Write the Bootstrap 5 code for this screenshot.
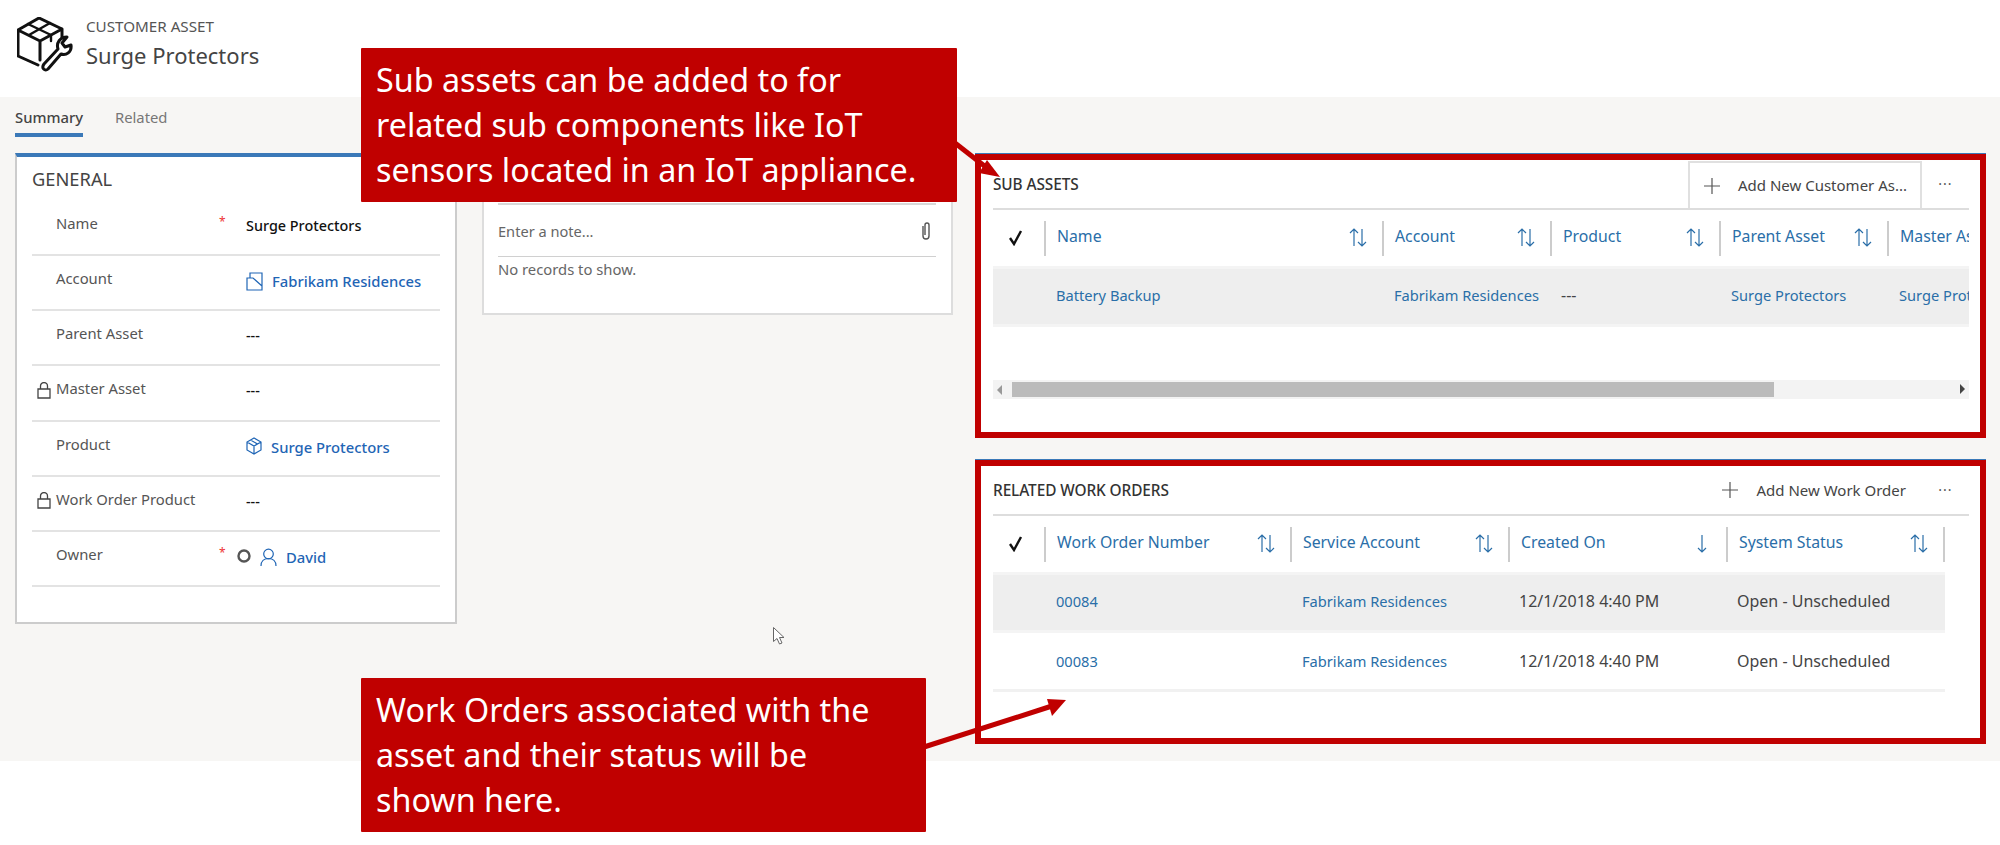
<!DOCTYPE html>
<html lang="en">
<head>
<meta charset="utf-8">
<title>Customer Asset</title>
<link rel="stylesheet" href="https://cdn.jsdelivr.net/npm/bootstrap@5.3.0/dist/css/bootstrap.min.css">
<style>
html,body{height:845px;overflow:hidden}
body{position:relative;background:#fff;font-family:"Noto Sans","Open Sans",sans-serif;font-size:13px;color:#444}
.ca-head{height:97px;padding:17px 0 0 17px;gap:13px}
.ca-eyebrow{font-size:15.200px;line-height:18px;color:#555}
.ca-title{font-size:22px;line-height:28px;margin-top:6px;color:#444}
.ca-main{height:664px;background:#f7f6f4;padding-left:15px}
.ca-tabs{height:56px;gap:32px;font-size:14.800px;padding-top:9px}
.ca-tab{height:31px;line-height:22px;color:#777}
.ca-tab.on{color:#444;font-weight:500;border-bottom:4px solid #3b79b8}
.ca-cols{gap:25px;align-items:flex-start}
.ca-general{width:442px;height:471px;border:2px solid #ccc;border-top:4px solid #3b79b8;padding:0 15px;background:#fff}
.ca-gtitle{height:44px;font-size:18.300px;line-height:44px;color:#444}
.ca-frow{height:55.170px;border-bottom:2px solid #e3e3e3;font-size:14.800px;width:408px}
.ca-lock{width:24px;padding:11px 0 0 5px}
.ca-label{width:163px;padding-top:12px;line-height:20px;color:#555}
.ca-star{width:18px;padding-top:12px;line-height:18px;color:#e33;font-size:12px}
.ca-value{padding:15px 0 0 9px;line-height:20px;color:#111;font-weight:500;font-size:14.400px;gap:9px;white-space:nowrap}
.ca-value.flush{padding-left:0}
.ca-link{color:#1f65b5;text-decoration:none;font-weight:500;font-size:14.800px}
.ca-notes{width:471px;height:162px;border:2px solid #ddd;padding:48px 15px 0 14px;background:#fff}
.ca-note{height:54px;border-top:2px solid #d8d8d8;border-bottom:1px solid #d0d0d0;color:#666;line-height:53px;font-size:14.600px}
.ca-empty{line-height:24px;color:#666;font-size:14.800px}
.ca-side{margin:1px 0 0 -3px;width:1011px;gap:22px}
.ca-panel{height:284px;border:6px solid #c00000;background:#fff;box-shadow:0 -1px 0 #3b79b8;padding:0 11px 0 12px}
.ca-phead{height:50px;border-bottom:2px solid #ddd}
.ca-ptitle{color:#333;font-weight:500;font-size:15.400px;letter-spacing:-.1px;padding-top:1px}
.ca-cmd{gap:18px;height:47px;padding:0 0 0 16px;color:#444;white-space:nowrap;font-size:15px}
.ca-cmd.open{padding-right:16px}
.ca-cmd.boxed{background:#fff;width:234px;border:2px solid #e0e0e0;border-bottom:0;padding:0 0 0 14px;margin-top:1px}
.ca-more{width:47px;text-align:center;color:#555;letter-spacing:1px;line-height:40px;font-size:14px}
.ca-grid{display:grid;overflow:hidden}
.ca-gridsub{grid-template-columns:51px 338px 168px 169px 168px 82px}
.ca-gridwo{grid-template-columns:51px 246px 218px 218px 219px;width:952px}
.ca-hrow{margin-top:11px;height:35px;font-size:15.800px}
.ca-hcell{height:35px;border-left:2px solid #ccc;padding:0 15px 3px 11px;color:#2a6ea8;white-space:nowrap;overflow:hidden}
.ca-hcell.last{border-right:2px solid #ccc}
.ca-check{text-align:center;padding-right:5px}
.ca-row{margin-top:10px;height:61px;background:#eee;border-top:3px solid #f4f4f4;border-bottom:3px solid #f4f4f4;padding-bottom:3px;font-size:16px;align-items:center}
.ca-row.plain{margin-top:0;height:59px;background:#fff;border-top:0;border-bottom:3px solid #f1f1f1;padding-bottom:0}
.ca-cell{padding-left:11px;color:#444;white-space:nowrap;overflow:hidden}
.ca-cell a{color:#2a6ea8;text-decoration:none;font-size:14.650px;margin-left:1px}
.ca-scroll{margin-top:53px;height:19px;background:#f3f3f3;padding:2px 0}
.ca-thumb{margin-left:19px;width:762px;height:15px;background:#bbb}
.ca-arr-l{position:absolute;left:4px;top:5px}
.ca-callout{position:absolute;background:#c00000;color:#fff;font-size:32.300px;line-height:45px;padding:9px 0 9px 15px;border-radius:1px;white-space:nowrap}
.ca-c1{left:361px;top:48px;width:596px;height:154px}
.ca-c2{left:361px;top:678px;width:565px;height:154px}
.ca-overlay{position:absolute;left:0;top:0;pointer-events:none}
</style>
</head>
<body>
<header class="ca-head d-flex">
  <svg width="56" height="56" viewBox="0 0 56 56" fill="none" stroke="#111" stroke-width="3" stroke-linejoin="round" stroke-linecap="round">
    <path d="M22 1 1 13v26l20 9M22 1l23 11v9M1 13l22 11 22-12M23 24v19"/>
    <path d="M11 7l23 11v6M33 6 12 18" stroke-width="2.400"/>
    <path d="M27 47 41 32c-2-6 2-12 9-12l-5 6 3 4 6-2c1 7-5 11-10 9L31 52c-3 3-7-1-4-5z" fill="#fff"/>
  </svg>
  <div>
    <div class="ca-eyebrow">CUSTOMER ASSET</div>
    <div class="ca-title">Surge Protectors</div>
  </div>
</header>
<main class="ca-main">
  <nav class="ca-tabs d-flex">
    <div class="ca-tab on">Summary</div>
    <div class="ca-tab">Related</div>
  </nav>
  <div class="ca-cols d-flex">
    <section class="ca-general card rounded-0">
      <div class="ca-gtitle">GENERAL</div>
      <div class="ca-frow d-flex"><div class="ca-lock"></div><div class="ca-label">Name</div><div class="ca-star">*</div><div class="ca-value">Surge Protectors</div></div>
      <div class="ca-frow d-flex"><div class="ca-lock"></div><div class="ca-label">Account</div><div class="ca-star"></div><div class="ca-value d-flex">
        <svg width="17" height="20" viewBox="0 0 17 20" fill="none" stroke="#1f65b5" stroke-width="1.200"><path d="M1 7h3V2h12v17H1zM4 7h3l9 8"/></svg>
        <a class="ca-link" href="#">Fabrikam Residences</a></div></div>
      <div class="ca-frow d-flex"><div class="ca-lock"></div><div class="ca-label">Parent Asset</div><div class="ca-star"></div><div class="ca-value">---</div></div>
      <div class="ca-frow d-flex"><div class="ca-lock"><svg width="14" height="17" viewBox="0 0 14 17" fill="none" stroke="#444" stroke-width="1.300"><path d="M1 7h12v9H1zM3.500 7V4a3.500 3.500 0 0 1 7 0v3"/></svg></div><div class="ca-label">Master Asset</div><div class="ca-star"></div><div class="ca-value">---</div></div>
      <div class="ca-frow d-flex"><div class="ca-lock"></div><div class="ca-label">Product</div><div class="ca-star"></div><div class="ca-value d-flex">
        <svg width="16" height="18" viewBox="0 0 16 18" fill="none" stroke="#1f65b5" stroke-width="1.200"><path d="M8 1 1 5v8l7 4 7-4V5zM1 5l7 4 7-4M8 9v8M4.500 3 11.500 7"/></svg>
        <a class="ca-link" href="#">Surge Protectors</a></div></div>
      <div class="ca-frow d-flex"><div class="ca-lock"><svg width="14" height="17" viewBox="0 0 14 17" fill="none" stroke="#444" stroke-width="1.300"><path d="M1 7h12v9H1zM3.500 7V4a3.500 3.500 0 0 1 7 0v3"/></svg></div><div class="ca-label">Work Order Product</div><div class="ca-star"></div><div class="ca-value">---</div></div>
      <div class="ca-frow d-flex"><div class="ca-lock"></div><div class="ca-label">Owner</div><div class="ca-star">*</div><div class="ca-value flush d-flex">
        <svg width="14" height="20" viewBox="0 0 14 20" fill="none" stroke="#555" stroke-width="2.400"><circle cx="7" cy="9" r="5.500"/></svg>
        <svg width="17" height="20" viewBox="0 0 17 20" fill="none" stroke="#1f65b5" stroke-width="1.200"><circle cx="8.500" cy="7" r="4.800"/><path d="M1 19c0-5 3-7.500 7.500-7.500S16 14 16 19"/></svg>
        <a class="ca-link" href="#">David</a></div></div>
    </section>
    <section class="ca-notes card rounded-0">
      <div class="ca-note d-flex justify-content-between"><span>Enter a note...</span>
        <svg class="mt-3 me-1" width="12" height="20" viewBox="0 0 12 20" fill="none" stroke="#555" stroke-width="1.400"><path d="M3 5v10a3 3 0 0 0 6 0V4a2 2 0 0 0-4 0v10"/></svg></div>
      <div class="ca-empty">No records to show.</div>
    </section>
    <div class="ca-side d-flex flex-column">
      <section class="ca-panel">
        <div class="ca-phead d-flex align-items-center">
          <div class="ca-ptitle me-auto">SUB ASSETS</div>
          <div class="ca-cmd boxed d-flex align-items-center">
            <svg width="16" height="16" viewBox="0 0 16 16" stroke="#555" stroke-width="1.200"><path d="M8 0v16M0 8h16"/></svg><span>Add New Customer As...</span></div>
          <div class="ca-more">···</div>
        </div>
        <div class="ca-grid ca-gridsub ca-hrow">
          <div class="ca-check"><svg width="18" height="16" viewBox="0 0 18 16" fill="none" stroke="#111" stroke-width="2.400" class="mt-2"><path d="M3 8l4 6 7-13"/></svg></div>
          <div class="ca-hcell d-flex align-items-center justify-content-between"><span>Name</span><svg width="18" height="19" viewBox="0 0 18 19" fill="none" stroke="#2a6ea8" stroke-width="1.200"><path d="M5 18V1M1 5l4-4 4 4M13 1v17M9 14l4 4 4-4"/></svg></div>
          <div class="ca-hcell d-flex align-items-center justify-content-between"><span>Account</span><svg width="18" height="19" viewBox="0 0 18 19" fill="none" stroke="#2a6ea8" stroke-width="1.200"><path d="M5 18V1M1 5l4-4 4 4M13 1v17M9 14l4 4 4-4"/></svg></div>
          <div class="ca-hcell d-flex align-items-center justify-content-between"><span>Product</span><svg width="18" height="19" viewBox="0 0 18 19" fill="none" stroke="#2a6ea8" stroke-width="1.200"><path d="M5 18V1M1 5l4-4 4 4M13 1v17M9 14l4 4 4-4"/></svg></div>
          <div class="ca-hcell d-flex align-items-center justify-content-between"><span>Parent Asset</span><svg width="18" height="19" viewBox="0 0 18 19" fill="none" stroke="#2a6ea8" stroke-width="1.200"><path d="M5 18V1M1 5l4-4 4 4M13 1v17M9 14l4 4 4-4"/></svg></div>
          <div class="ca-hcell d-flex align-items-center pe-0"><span>Master Asset</span></div>
        </div>
        <div class="ca-grid ca-gridsub ca-row">
          <div></div>
          <div class="ca-cell"><a href="#">Battery Backup</a></div>
          <div class="ca-cell"><a href="#">Fabrikam Residences</a></div>
          <div class="ca-cell">---</div>
          <div class="ca-cell"><a href="#">Surge Protectors</a></div>
          <div class="ca-cell"><a href="#">Surge Protectors</a></div>
        </div>
        <div class="ca-scroll position-relative">
          <svg class="ca-arr-l" width="6" height="10" viewBox="0 0 6 10" fill="#999"><path d="M5 0v10L0 5z"/></svg>
          <div class="ca-thumb"></div>
          <svg class="position-absolute end-0 top-0 mt-1 me-1" width="6" height="10" viewBox="0 0 6 10" fill="#444"><path d="M1 0v10l5-5z"/></svg>
        </div>
      </section>
      <section class="ca-panel">
        <div class="ca-phead d-flex align-items-center">
          <div class="ca-ptitle me-auto">RELATED WORK ORDERS</div>
          <div class="ca-cmd open d-flex align-items-center">
            <svg width="16" height="16" viewBox="0 0 16 16" stroke="#555" stroke-width="1.200"><path d="M8 0v16M0 8h16"/></svg><span>Add New Work Order</span></div>
          <div class="ca-more">···</div>
        </div>
        <div class="ca-grid ca-gridwo ca-hrow">
          <div class="ca-check"><svg width="18" height="16" viewBox="0 0 18 16" fill="none" stroke="#111" stroke-width="2.400" class="mt-2"><path d="M3 8l4 6 7-13"/></svg></div>
          <div class="ca-hcell d-flex align-items-center justify-content-between"><span>Work Order Number</span><svg width="18" height="19" viewBox="0 0 18 19" fill="none" stroke="#2a6ea8" stroke-width="1.200"><path d="M5 18V1M1 5l4-4 4 4M13 1v17M9 14l4 4 4-4"/></svg></div>
          <div class="ca-hcell d-flex align-items-center justify-content-between"><span>Service Account</span><svg width="18" height="19" viewBox="0 0 18 19" fill="none" stroke="#2a6ea8" stroke-width="1.200"><path d="M5 18V1M1 5l4-4 4 4M13 1v17M9 14l4 4 4-4"/></svg></div>
          <div class="ca-hcell d-flex align-items-center justify-content-between"><span>Created On</span><svg width="10" height="19" viewBox="0 0 10 19" fill="none" stroke="#2a6ea8" stroke-width="1.200" class="me-1"><path d="M5 1v17M1 14l4 4 4-4"/></svg></div>
          <div class="ca-hcell last d-flex align-items-center justify-content-between"><span>System Status</span><svg width="18" height="19" viewBox="0 0 18 19" fill="none" stroke="#2a6ea8" stroke-width="1.200"><path d="M5 18V1M1 5l4-4 4 4M13 1v17M9 14l4 4 4-4"/></svg></div>
        </div>
        <div class="ca-grid ca-gridwo ca-row">
          <div></div>
          <div class="ca-cell"><a href="#">00084</a></div>
          <div class="ca-cell"><a href="#">Fabrikam Residences</a></div>
          <div class="ca-cell">12/1/2018 4:40 PM</div>
          <div class="ca-cell">Open - Unscheduled</div>
        </div>
        <div class="ca-grid ca-gridwo ca-row plain">
          <div></div>
          <div class="ca-cell"><a href="#">00083</a></div>
          <div class="ca-cell"><a href="#">Fabrikam Residences</a></div>
          <div class="ca-cell">12/1/2018 4:40 PM</div>
          <div class="ca-cell">Open - Unscheduled</div>
        </div>
      </section>
    </div>
  </div>
</main>
<svg class="ca-overlay" width="2000" height="845" viewBox="0 0 2000 845">
  <path d="M955 143 987 168" stroke="#c00000" stroke-width="5" fill="none"/>
  <path d="M1000 177 987 160 979 173z" fill="#c00000"/>
  <path d="M924 747 1052 706" stroke="#c00000" stroke-width="5" fill="none"/>
  <path d="M1066 700 1047 699 1052 716z" fill="#c00000"/>
  <path d="M773.500 627.500v14l3.500-3 2.500 5.500 2.500-1-2.500-5.500h4.500z" fill="#fff" stroke="#666" stroke-width="1"/>
</svg>
<div class="ca-callout ca-c1">Sub assets can be added to for<br>related sub components like IoT<br>sensors located in an IoT appliance.</div>
<div class="ca-callout ca-c2">Work Orders associated with the<br>asset and their status will be<br>shown here.</div>
<script src="https://cdn.jsdelivr.net/npm/bootstrap@5.3.0/dist/js/bootstrap.bundle.min.js"></script>
</body>
</html>
